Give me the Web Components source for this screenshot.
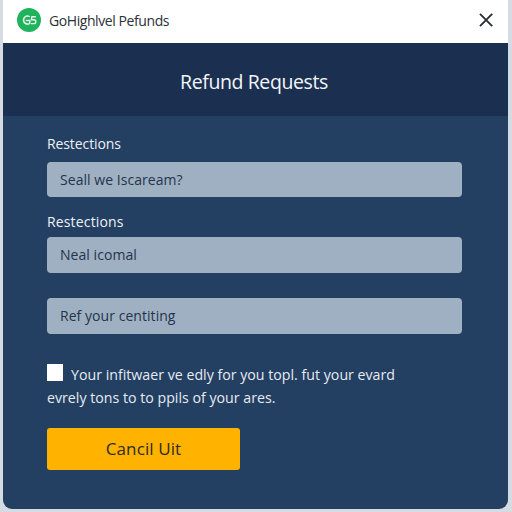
<!DOCTYPE html>
<html><head><meta charset="utf-8"><style>
html,body{margin:0;padding:0;width:512px;height:512px;overflow:hidden;background:#d5dbe2;font-family:"Open Sans","Noto Sans",sans-serif}
</style></head><body>
<refund-window>
  <title-bar slot="top">GoHighlvel Pefunds</title-bar>
  <panel-header slot="top">Refund Requests</panel-header>
  <form-field label="Restections" style="--label-h:18px;--gap:9px;--input-h:35px;--ls:-.1px">Seall we Iscaream?</form-field>
  <form-field label="Restections" style="--label-h:18px;--gap:6px;--input-h:36px;--mt:16px;--ls:.15px">Neal icomal</form-field>
  <form-field style="--input-h:36px;--mt:25px">Ref your centiting</form-field>
  <consent-row>Your infitwaer ve edly for you topl. fut your evard evrely tons to to ppils of your ares.</consent-row>
  <action-button>Cancil Uit</action-button>
</refund-window>
<script>
function def(name, html){
  customElements.define(name, class extends HTMLElement{
    constructor(){super();this.attachShadow({mode:'open'}).innerHTML=html;}
    connectedCallback(){
      const l=this.shadowRoot.querySelector('.label');
      if(l){ if(this.hasAttribute('label')) l.textContent=this.getAttribute('label'); else l.remove(); }
    }
  });
}
def('refund-window',`<style>
:host{display:flex;flex-direction:column;box-sizing:border-box;width:505px;height:509px;margin-left:3px;background:#233f62;border-radius:0 0 9px 9px;overflow:hidden}
.body{display:flex;flex-direction:column;padding:19px 46px 0 44px}
</style><slot name="top"></slot><div class="body"><slot></slot></div>`);
def('title-bar',`<style>
:host{display:flex;align-items:center;box-sizing:border-box;height:43px;flex:none;background:#fff;padding:0 13px 3px 14px;color:#2b3138;font:14px "Open Sans",sans-serif;letter-spacing:-.42px}
.logo{width:24px;height:24px;margin-right:8px;flex:none}
.t{flex:1}
svg.x{width:18px;height:18px;flex:none}
</style>
<svg class="logo" viewBox="0 0 24 24"><circle cx="12" cy="12" r="12" fill="#1fb45c"/><path d="M12.2 8.4a4 4 0 1 0 .2 7.2M9.4 12.6h3.4v2.6" fill="none" stroke="#e6f8ec" stroke-width="1.5" stroke-linecap="round"/><path d="M18.4 8.8h-3.6l-.3 3h2.4a1.9 1.9 0 0 1 0 3.8h-2.6" fill="none" stroke="#e6f8ec" stroke-width="1.4" stroke-linecap="round" stroke-linejoin="round"/></svg>
<span class="t"><slot></slot></span>
<svg class="x" viewBox="0 0 18 18"><path d="M3 2.8 15.2 15.2M15.2 2.8 3 15.2" stroke="#2a3038" stroke-width="1.9" fill="none"/></svg>`);
def('panel-header',`<style>
:host{display:flex;align-items:center;justify-content:center;height:73px;flex:none;background:#1b3050;color:#f3f6f9;font:19.5px "Open Sans",sans-serif;letter-spacing:-.4px;padding:4px 3px 0 0;box-sizing:border-box}
</style><slot></slot>`);
def('form-field',`<style>
:host{display:block;margin-top:var(--mt,0)}
.label{display:block;height:var(--label-h,18px);line-height:18px;margin-bottom:var(--gap,8px);color:#edf1f5;font:14px/18px "Open Sans",sans-serif;letter-spacing:var(--ls,0)}
.input{display:flex;align-items:center;box-sizing:border-box;height:var(--input-h,36px);background:#9fb0c2;border-radius:4px;padding:0 13px 1px;color:#24344c;font:14px "Open Sans",sans-serif;letter-spacing:.05px}
</style><span class="label"></span><div class="input"><slot></slot></div>`);
def('consent-row',`<style>
:host{display:block;margin-top:29px;width:360px;color:#e6ebf1;font:14.2px/23px "Open Sans",sans-serif;letter-spacing:0}
.box{float:left;width:16px;height:17px;background:#fff;margin:1px 8px 0 0}
</style><span class="box"></span><slot></slot>`);
def('action-button',`<style>
:host{display:flex;align-items:center;justify-content:center;box-sizing:border-box;width:193px;height:42px;margin-top:19px;padding-bottom:1px;background:#ffb300;border-radius:3px;color:#2c2c20;font:17px "Open Sans",sans-serif;letter-spacing:.1px}
</style><slot></slot>`);
</script>
</body></html>
